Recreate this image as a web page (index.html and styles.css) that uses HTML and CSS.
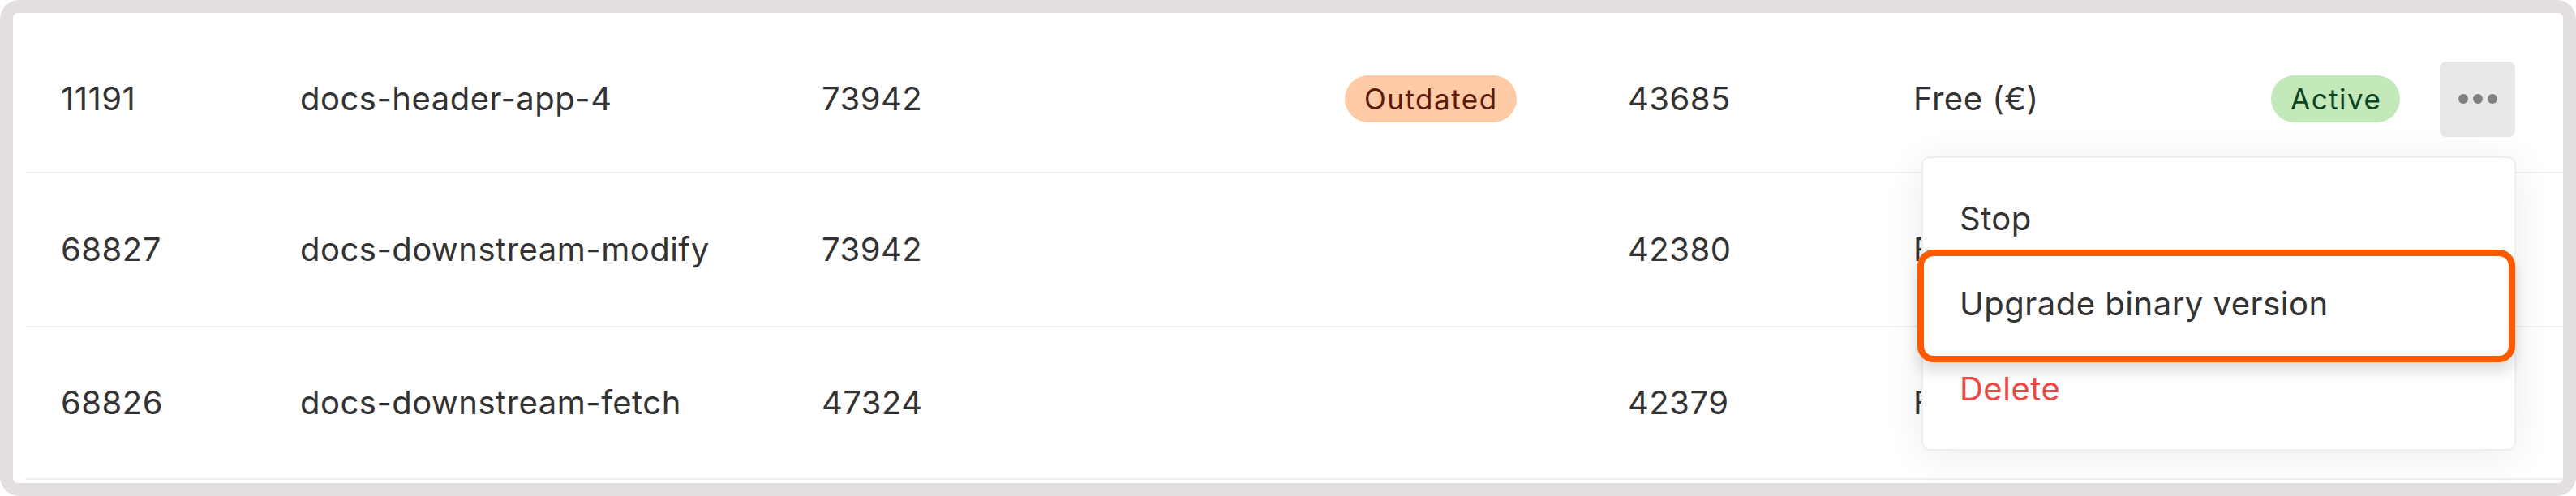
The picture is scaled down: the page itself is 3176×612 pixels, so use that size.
FILE: index.html
```html
<!DOCTYPE html>
<html lang="en">
<head>
<meta charset="utf-8">
<title>Nodes</title>
<link rel="stylesheet" href="styles.css">
</head>
<body>
<div class="frame">
  <div class="panel">
    <div class="rows">
      <div class="row first">
        <div class="cell">11191</div>
        <div class="cell">docs-header-app-4</div>
        <div class="cell">73942</div>
        <div class="cell"><span class="badge outdated">Outdated</span></div>
        <div class="cell">43685</div>
        <div class="cell">Free (€)</div>
        <div class="cell"><span class="badge active">Active</span></div>
        <div class="cell"><button class="more" type="button" aria-label="More actions"><span class="dot"></span><span class="dot"></span><span class="dot"></span></button></div>
      </div>
      <div class="row second">
        <div class="cell">68827</div>
        <div class="cell">docs-downstream-modify</div>
        <div class="cell">73942</div>
        <div class="cell"></div>
        <div class="cell">42380</div>
        <div class="cell">Free (€)</div>
        <div class="cell"><span class="badge active">Active</span></div>
        <div class="cell"></div>
      </div>
      <div class="row third">
        <div class="cell">68826</div>
        <div class="cell">docs-downstream-fetch</div>
        <div class="cell">47324</div>
        <div class="cell"></div>
        <div class="cell">42379</div>
        <div class="cell">Free (€)</div>
        <div class="cell"><span class="badge active">Active</span></div>
        <div class="cell"></div>
      </div>
    </div>
    <div class="menu">
      <div class="menu-item">Stop</div>
      <div class="menu-item highlight">Upgrade binary version</div>
      <div class="menu-item danger">Delete</div>
    </div>
  </div>
</div>
</body>
</html>
```
FILE: styles.css
```css
* { box-sizing: border-box; }

html, body {
  margin: 0;
  padding: 0;
  background: #ffffff;
}

body {
  font-family: Inter, "Noto Sans", "Liberation Sans", sans-serif;
  color: #333333;
  width: 3176px;
  height: 612px;
  overflow: hidden;
}

.frame {
  width: 3176px;
  height: 612px;
  padding: 16px;
  background: #e3dfde;
  border-radius: 24px;
}

.panel {
  position: relative;
  height: 580px;
  background: #ffffff;
  border-radius: 6px;
  overflow: visible;
}

.rows {
  display: flex;
  flex-direction: column;
  margin-left: 15px;
}

.row {
  display: grid;
  grid-template-columns: 295px 643px 645px 349px 352px 441px 208px 93px;
  align-items: center;
  padding-left: 44px;
  border-bottom: 2px solid #f0f0f0;
  font-size: 40px;
  line-height: 48px;
  letter-spacing: 0.5px;
}

.row.first { height: 198px; padding-top: 16px; }
.row.second { height: 190px; }
.row.third { height: 188px; }

.cell {
  white-space: nowrap;
  display: flex;
  align-items: center;
}

.badge {
  display: inline-flex;
  align-items: center;
  height: 58px;
  padding: 0 23px 0 24px;
  border-radius: 29px;
  font-size: 35px;
  line-height: 42px;
  letter-spacing: 1.5px;
}

.badge.outdated {
  background: #fecba6;
  color: #5e1a0a;
}

.badge.active {
  background: #c3e8b9;
  color: #0f4423;
}

.more {
  display: flex;
  align-items: center;
  justify-content: center;
  gap: 6px;
  width: 93px;
  height: 93px;
  padding: 0;
  border: 0;
  border-radius: 8px;
  background: #e8e8e8;
}

.dot {
  width: 12px;
  height: 12px;
  border-radius: 50%;
  background: #7f7f7f;
}

.menu {
  position: absolute;
  left: 2353px;
  top: 177px;
  width: 733px;
  padding: 22px 0;
  background: #ffffff;
  border: 2px solid #eeeeee;
  border-radius: 10px;
  box-shadow: 0 6px 48px rgba(0, 0, 0, 0.08);
}

.menu-item {
  position: relative;
  height: 105px;
  display: flex;
  align-items: center;
  padding-left: 45px;
  font-size: 40px;
  line-height: 48px;
  letter-spacing: 0.5px;
  color: #333333;
}

.menu-item.danger {
  color: #f04646;
}

.menu-item.highlight::after {
  content: "";
  position: absolute;
  left: -7px;
  right: -1px;
  top: -14px;
  bottom: -20px;
  border: 8px solid #ff5a00;
  border-radius: 20px;
  box-shadow: 0 12px 18px rgba(0, 0, 0, 0.13);
}
```
